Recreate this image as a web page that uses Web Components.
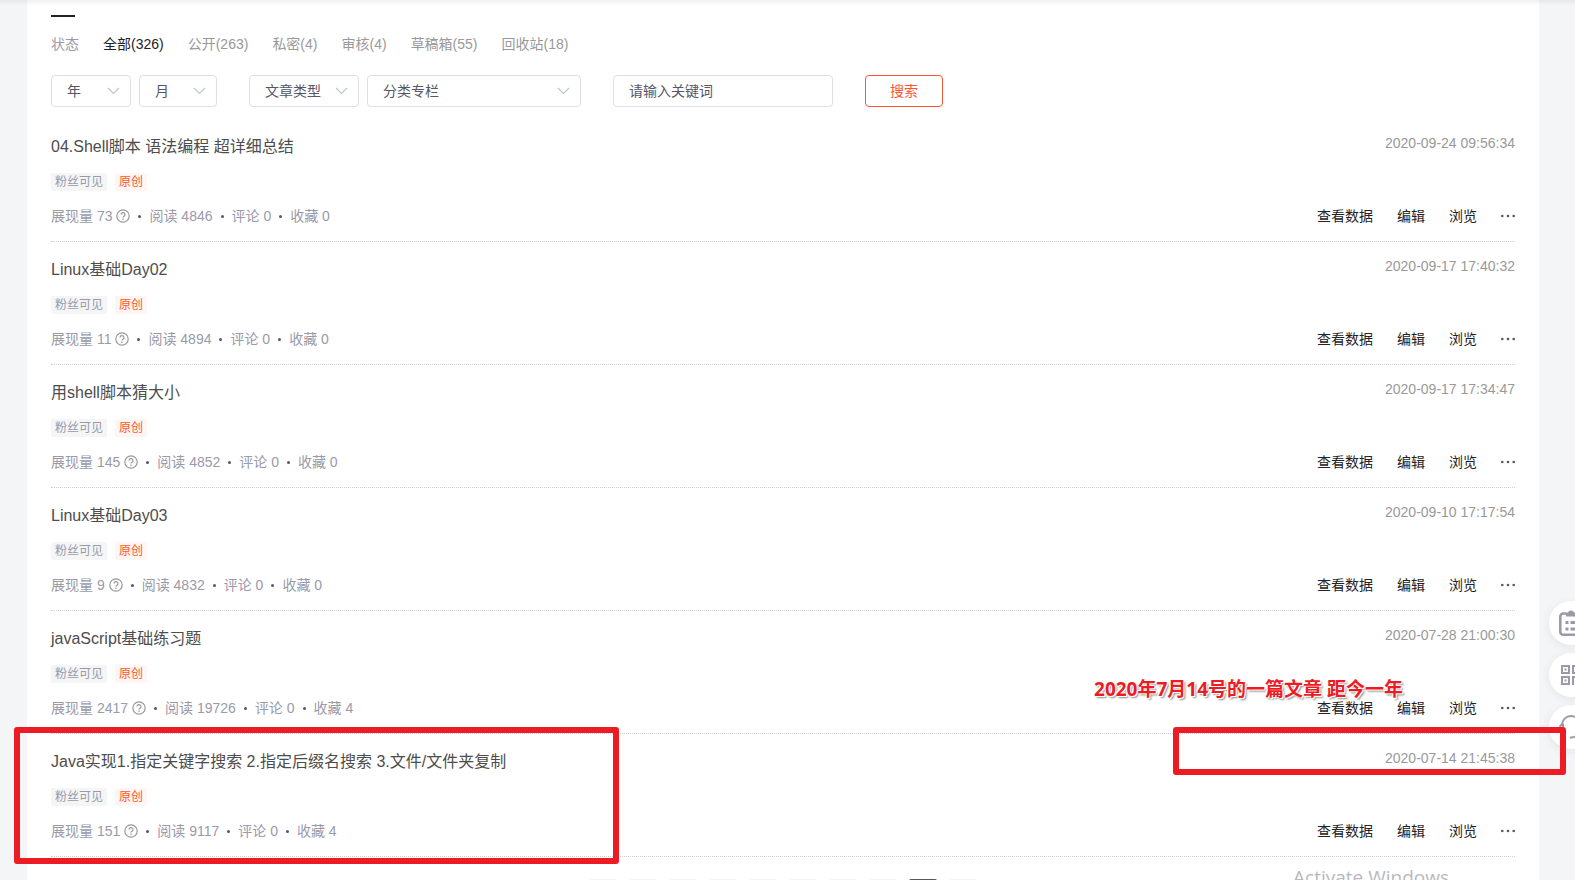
<!DOCTYPE html>
<html lang="zh-CN">
<head>
<meta charset="utf-8">
<title>文章管理</title>
<style>
    body {
        margin: 0;
        height: 100vh;
        overflow: hidden;
        background: #f4f5f7;
        color: #222226;
        font: 14px/20px "Liberation Sans", "Noto Sans CJK SC", sans-serif;
    }
</style>
</head>
<body>
<article-manager></article-manager>

<script>
// Datos de la lista de artículos
const articles = [
    { title: '04.Shell脚本 语法编程 超详细总结', date: '2020-09-24 09:56:34', shows: 73, reads: 4846, comments: 0, favs: 0 },
    { title: 'Linux基础Day02', date: '2020-09-17 17:40:32', shows: 11, reads: 4894, comments: 0, favs: 0 },
    { title: '用shell脚本猜大小', date: '2020-09-17 17:34:47', shows: 145, reads: 4852, comments: 0, favs: 0 },
    { title: 'Linux基础Day03', date: '2020-09-10 17:17:54', shows: 9, reads: 4832, comments: 0, favs: 0 },
    { title: 'javaScript基础练习题', date: '2020-07-28 21:00:30', shows: 2417, reads: 19726, comments: 0, favs: 4 },
    { title: 'Java实现1.指定关键字搜索 2.指定后缀名搜索 3.文件/文件夹复制', date: '2020-07-14 21:45:38', shows: 151, reads: 9117, comments: 0, favs: 4 }
];

class StatusTabs extends HTMLElement {
    constructor() {
        super();
        this.attachShadow({mode: 'open'});
    }

    connectedCallback() {
        this.shadowRoot.innerHTML = `
        <style>
            :host { display: block; }
            nav { display: flex; gap: 24px; }
            span { color: #999aaa; }
            a { color: #999; text-decoration: none; }
            a.active { color: #222226; }
        </style>
        <nav>
            <span>状态</span>
            <a href="#all" class="active">全部(326)</a>
            <a href="#public">公开(263)</a>
            <a href="#private">私密(4)</a>
            <a href="#audit">审核(4)</a>
            <a href="#draft">草稿箱(55)</a>
            <a href="#recycle">回收站(18)</a>
        </nav>
        `;
    }
}

// Lista desplegable con su flecha
class FilterSelect extends HTMLElement {
    constructor() {
        super();
        this.attachShadow({mode: 'open'});
    }

    connectedCallback() {
        const label = this.getAttribute('label');
        this.shadowRoot.innerHTML = `
        <style>
            :host { display: grid; }
            select, svg { grid-area: 1 / 1; }
            select {
                appearance: none;
                box-sizing: border-box;
                width: 100%;
                height: 32px;
                padding: 0 32px 0 15px;
                border: 1px solid #dcdfe6;
                border-radius: 4px;
                background: #fff;
                color: #555666;
                font: inherit;
            }
            svg {
                align-self: center;
                justify-self: end;
                margin-right: 11px;
                pointer-events: none;
            }
        </style>
        <select aria-label="${label}"><option>${label}</option></select>
        <svg width="13" height="8" viewBox="0 0 13 8" fill="none" stroke="#c0c4cc" stroke-width="1.2"><path d="M1 1l5.500 5.500L12 1"/></svg>
        `;
    }
}

class FilterBar extends HTMLElement {
    constructor() {
        super();
        this.attachShadow({mode: 'open'});
    }

    connectedCallback() {
        this.shadowRoot.innerHTML = `
        <style>
            :host { display: block; }
            form { display: flex; gap: 32px; }
            .group { display: flex; gap: 8px; }
            .year { width: 80px; }
            .month { width: 78px; }
            .type { width: 110px; }
            .column { width: 214px; }
            input, button {
                box-sizing: border-box;
                height: 32px;
                border-radius: 4px;
                background: #fff;
                font: inherit;
            }
            input {
                width: 220px;
                padding: 0 15px;
                border: 1px solid #dcdfe6;
            }
            input::placeholder { color: #555666; }
            button {
                width: 78px;
                padding: 0;
                border: 1px solid #fc5531;
                color: #fc5531;
            }
        </style>
        <form>
            <div class="group">
                <filter-select class="year" label="年"></filter-select>
                <filter-select class="month" label="月"></filter-select>
            </div>
            <div class="group">
                <filter-select class="type" label="文章类型"></filter-select>
                <filter-select class="column" label="分类专栏"></filter-select>
            </div>
            <input type="text" placeholder="请输入关键词" aria-label="请输入关键词">
            <button type="button">搜索</button>
        </form>
        `;
    }
}

class ArticleItem extends HTMLElement {
    constructor() {
        super();
        this.attachShadow({mode: 'open'});
    }

    connectedCallback() {
        this.shadowRoot.innerHTML = `
        <style>
            :host {
                display: block;
                padding: 16px 0 15px;
                border-bottom: 1px dotted #d0d0d4;
            }
            .row {
                display: flex;
                justify-content: space-between;
                align-items: flex-start;
            }
            .date { color: #999; line-height: 16px; }
            .tags {
                display: flex;
                gap: 8px;
                margin: 14px 0 15px;
                font-size: 12px;
                line-height: 18px;
            }
            .tags span {
                padding: 0 4px;
                border-radius: 2px;
                background: #f5f5f5;
                color: #999aaa;
            }
            .tags .original { background: #fff5f2; color: #fc5531; }
            .stats { display: flex; align-items: center; color: #999aaa; }
            .stats svg { margin-left: 4px; }
            .stats i {
                width: 3px;
                height: 3px;
                margin: 0 8px;
                border-radius: 50%;
                background: #555666;
            }
            .actions { display: flex; align-items: center; gap: 24px; }
            a { color: #222226; text-decoration: none; }
            button { display: flex; padding: 0; border: 0; background: none; }
        </style>
        <div class="row">
            <slot name="title"></slot>
            <span class="date"><slot name="date"></slot></span>
        </div>
        <div class="tags"><span>粉丝可见</span><span class="original">原创</span></div>
        <div class="row">
            <div class="stats">
                <span>展现量 ${this.getAttribute('shows')}</span>
                <svg width="14" height="14" viewBox="0 0 14 14" fill="none" stroke="#999" stroke-width="1.2">
                    <circle cx="7" cy="7" r="6.200"/>
                    <path d="M5 5.600a2 2 0 1 1 3 1.700c-.7.4-1 .7-1 1.300M7 9.600v1.300"/>
                </svg>
                <i></i><span>阅读 ${this.getAttribute('reads')}</span>
                <i></i><span>评论 ${this.getAttribute('comments')}</span>
                <i></i><span>收藏 ${this.getAttribute('favs')}</span>
            </div>
            <div class="actions">
                <a href="#data">查看数据</a>
                <a href="#edit">编辑</a>
                <a href="#view">浏览</a>
                <button type="button" aria-label="更多">
                    <svg width="14" height="4" viewBox="0 0 14 4" fill="#555666"><circle cx="1.300" cy="2" r="1.300"/><circle cx="7" cy="2" r="1.300"/><circle cx="12.700" cy="2" r="1.300"/></svg>
                </button>
            </div>
        </div>
        `;
    }
}

class PageNav extends HTMLElement {
    constructor() {
        super();
        this.attachShadow({mode: 'open'});
    }

    connectedCallback() {
        this.shadowRoot.innerHTML = `
        <style>
            :host { display: flex; justify-content: center; gap: 12px; }
            button {
                width: 28px;
                height: 28px;
                padding: 0;
                border: 0;
                border-radius: 2px;
                background: #f4f4f5;
            }
            button.active { background: #555666; }
        </style>
        `;
        for (let i = 0; i < 10; i++) {
            const button = document.createElement('button');
            button.type = 'button';
            button.setAttribute('aria-label', i === 0 ? '上一页' : i === 9 ? '下一页' : `第 ${i} 页`);
            button.classList.toggle('active', i === 8);
            this.shadowRoot.appendChild(button);
        }
    }
}

// Botones flotantes en el borde derecho
class SideTools extends HTMLElement {
    constructor() {
        super();
        this.attachShadow({mode: 'open'});
    }

    connectedCallback() {
        this.shadowRoot.innerHTML = `
        <style>
            :host {
                position: fixed;
                right: -18px;
                bottom: 131px;
                display: grid;
                gap: 8px;
            }
            button {
                display: grid;
                place-items: center;
                width: 44px;
                height: 44px;
                padding: 0;
                border: 0;
                border-radius: 50%;
                background: #fff;
                box-shadow: 0 2px 8px rgba(85, 86, 102, .1);
            }
            svg { fill: none; stroke: #999aaa; stroke-width: 2; }
        </style>
        <button type="button" aria-label="任务">
            <svg width="28" height="28" viewBox="0 0 28 28">
                <path stroke-width="2.600" d="M9 4.500H6.300A3 3 0 0 0 3.300 7.500v15.200a3 3 0 0 0 3 3h15.400a3 3 0 0 0 3-3V7.500a3 3 0 0 0-3-3H19"/>
                <path fill="#999aaa" stroke="none" d="M9 3.500h2c.5-1.300 1.500-2 3-2s2.500.7 3 2h2v4H9z"/>
                <path stroke-width="3" d="M8.500 13.500h3M13.500 13.500h7M8.500 20h3M13.500 20h7"/>
            </svg>
        </button>
        <button type="button" aria-label="二维码">
            <svg width="20" height="20" viewBox="0 0 20 20">
                <path d="M1 1h7v7H1zM12 1h7v7h-7zM1 12h7v7H1zM12 20v-8h3v3h4v-4M18 17v3"/>
                <path d="M3.500 4.500h2M14.500 4.500h2M3.500 15.500h2"/>
            </svg>
        </button>
        <button type="button" aria-label="客服">
            <svg width="24" height="24" viewBox="0 0 24 24">
                <path d="M3 10a9 9 0 0 1 18 0M21 15a9 9 0 0 1-10 7.500"/>
                <path d="M4 9.500a2.500 2.500 0 0 0 0 6zM20 9.500a2.500 2.500 0 0 1 0 6z"/>
            </svg>
        </button>
        `;
    }
}

// Marco rojo que resalta una zona, la posición la pone quien lo usa
class MarkBox extends HTMLElement {
    constructor() {
        super();
        this.attachShadow({mode: 'open'});
        this.shadowRoot.innerHTML = `
        <style>
            :host {
                position: absolute;
                box-sizing: border-box;
                border: 6px solid #ed1c24;
                border-radius: 3px;
                pointer-events: none;
            }
        </style>
        `;
    }
}

class ArticleManager extends HTMLElement {
    constructor() {
        super();
        this.attachShadow({mode: 'open'});
    }

    connectedCallback() {
        this.shadowRoot.innerHTML = `
        <style>
            :host {
                display: block;
                height: 100%;
                overflow: hidden;
                position: relative;
            }
            main {
                margin: 0 36px 0 27px;
                padding: 15px 24px 24px;
                background: #fff;
            }
            .shade {
                position: absolute;
                inset: 0 0 auto;
                height: 5px;
                background: linear-gradient(rgba(0, 0, 0, .06), transparent);
            }
            .ink { width: 24px; height: 2px; background: #222226; }
            status-tabs { margin-top: 17px; }
            filter-bar { margin: 21px 0 12px; }
            page-nav { margin-top: 22px; }
            .title { color: #4d4d4d; font-size: 16px; line-height: 24px; text-decoration: none; }
            .first { left: 14px; top: 727px; width: 605px; height: 137px; }
            .second { right: 9px; top: 727px; width: 393px; height: 48px; }
            .note {
                position: absolute;
                right: 172px;
                top: 677px;
                color: #ed1c24;
                font: bold 19px/24px "Open Sans", "Noto Sans CJK SC", sans-serif;
                text-shadow: 0 0 2px #fff, 1px 1px 0 #fff, -1px -1px 0 #fff, 2px 2px 2px #888;
                white-space: nowrap;
            }
            .watermark {
                position: absolute;
                right: 126px;
                top: 863px;
                color: #b9b9bb;
                font: 19px/28px "Open Sans", sans-serif;
                white-space: nowrap;
            }
        </style>
        <main>
            <div class="ink"></div>
            <status-tabs></status-tabs>
            <filter-bar></filter-bar>
            <section></section>
            <page-nav></page-nav>
        </main>
        <div class="shade"></div>
        <side-tools></side-tools>
        <mark-box class="first"></mark-box>
        <mark-box class="second"></mark-box>
        <div class="note">2020年7月14号的一篇文章 距今一年</div>
        <div class="watermark">Activate Windows</div>
        `;

        const list = this.shadowRoot.querySelector('section');
        articles.forEach((article) => {
            const item = document.createElement('article-item');
            ['shows', 'reads', 'comments', 'favs'].forEach((key) => item.setAttribute(key, article[key]));
            item.innerHTML = `
                <a class="title" slot="title" href="#article">${article.title}</a>
                <span slot="date">${article.date}</span>
            `;
            list.appendChild(item);
        });
    }
}

customElements.define('status-tabs', StatusTabs);
customElements.define('filter-select', FilterSelect);
customElements.define('filter-bar', FilterBar);
customElements.define('article-item', ArticleItem);
customElements.define('page-nav', PageNav);
customElements.define('side-tools', SideTools);
customElements.define('mark-box', MarkBox);
customElements.define('article-manager', ArticleManager);
</script>
</body>
</html>
